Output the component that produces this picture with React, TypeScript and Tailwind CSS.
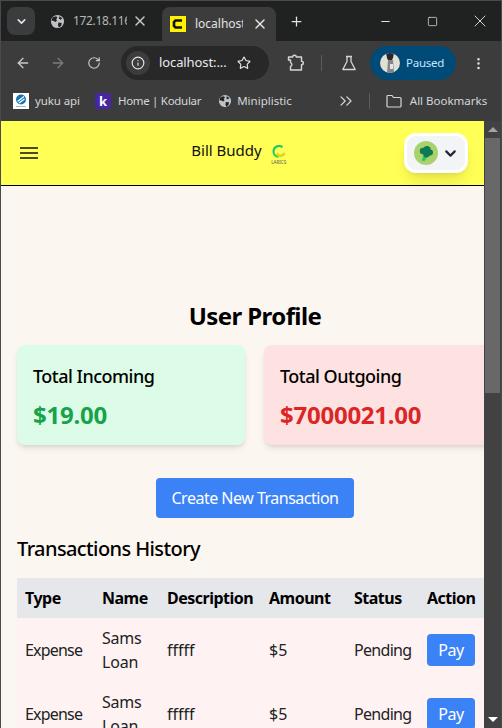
import { ArrowLeft, ArrowRight, ChevronDown, ChevronsRight, Info, Minus, MoreVertical, Plus, RotateCw, Square, Star, X } from "lucide-react";

const rows = [
  { type: "Expense", name: "Sams Loan", description: "fffff", amount: "$5", status: "Pending" },
  { type: "Expense", name: "Sams Loan", description: "fffff", amount: "$5", status: "Pending" },
];

function GlobeIcon({ className }: { className?: string }) {
  return (
    <svg viewBox="0 0 16 16" className={className}>
      <circle cx="8" cy="8" r="7" fill="currentColor" />
      <path d="M3 3.5 6.5 2.5 8 4 6.5 5.5 7.5 7 6 8.5 4 7.5 1.5 7ZM9 9l3.5.5-.5 3-2.5 2-1-2.5ZM10 2.5l3 2-1.5 1.5-2-1Z" fill="#202124" />
    </svg>
  );
}

function CodeFavicon() {
  return (
    <svg viewBox="0 0 16 16" className="h-4 w-4 shrink-0">
      <rect width="16" height="16" fill="#fff200" />
      <path d="M12 4.5H5.5L4 6v4l1.5 1.5H12" fill="none" stroke="#111" strokeWidth="2.6" />
    </svg>
  );
}

function ExtensionIcon() {
  return (
    <svg viewBox="0 0 18 18" className="h-[18px] w-[18px] text-[#d5d7d9]" fill="none" stroke="currentColor" strokeWidth="1.4" strokeLinejoin="round">
      <path d="M1.5 3h4.2a1.8 1.8 0 0 1 3.6 0h5.2v4.2a1.8 1.8 0 0 1 0 3.6V16H3.5v-3.6a2 2 0 0 0 0-3.8V6H1.5Z" />
    </svg>
  );
}

function FlaskIcon() {
  return (
    <svg viewBox="0 0 16 16" className="h-4 w-4 text-[#d5d7d9]" fill="none" stroke="currentColor" strokeWidth="1.3" strokeLinejoin="round">
      <path d="M5 1.5h6M6 1.5v5L1.8 14.5h12.4L10 6.5v-5" />
    </svg>
  );
}

function FolderIcon() {
  return (
    <svg viewBox="0 0 16 14" className="h-[14px] w-4 text-[#d5d7d9]" fill="none" stroke="currentColor" strokeWidth="1.2" strokeLinejoin="round">
      <path d="M1 2.5a1 1 0 0 1 1-1h4l1.5 2H14a1 1 0 0 1 1 1v7.5a1 1 0 0 1-1 1H2a1 1 0 0 1-1-1Z" />
    </svg>
  );
}

function ProfilePicture() {
  return (
    <svg viewBox="0 0 20 20" className="h-5 w-5 rounded-full">
      <rect width="20" height="20" fill="#e0e0d4" />
      <path d="M6 0h8l-1 5-1 2H8L7 5Z" fill="#26282a" />
      <path d="M8 7h5l1 13H7Z" fill="#85868a" />
      <rect x="10" y="11" width="3" height="5" fill="#e4e4e4" />
    </svg>
  );
}

function YukuIcon() {
  return (
    <div className="flex h-4 w-4 items-center justify-center bg-white">
      <svg viewBox="0 0 16 16" className="h-4 w-4">
        <circle cx="8" cy="6.5" r="5" fill="#1573b7" />
        <path d="M4.5 8.5 11 3.5M6 10l5.5-4" stroke="#fff" strokeWidth="1.3" />
        <rect x="3" y="13" width="10" height="1" fill="#9fb8c9" />
      </svg>
    </div>
  );
}

function BroccoliIcon() {
  return (
    <svg viewBox="0 0 24 24" className="h-6 w-6 rounded-full">
      <rect width="24" height="24" fill="#a9d26f" />
      <path d="M9.5 15 7.5 19.5 10.5 20 13 16Z" fill="#18c964" />
      <circle cx="9" cy="10" r="3.2" fill="#0d7a52" />
      <circle cx="13" cy="8.5" r="3.6" fill="#0d7a52" />
      <circle cx="16" cy="11.5" r="3" fill="#0d7a52" />
      <circle cx="12.5" cy="13" r="3.4" fill="#0d7a52" />
    </svg>
  );
}

function LogoMark() {
  return (
    <div className="flex w-[18px] flex-col items-center">
      <svg viewBox="0 0 16 15" className="h-[15px] w-[16px]">
        <path d="M11.5 2.2A5.5 5.5 0 0 0 2.5 6.5c0 3 2.2 5.2 5 5.2" fill="none" stroke="#18c964" strokeWidth="2" />
        <path d="M5.5 8.5c1.7 3 6.5 3 8-.5" fill="none" stroke="#d8d820" strokeWidth="2.6" />
      </svg>
      <span className="text-[4.5px] leading-[5px] whitespace-nowrap text-[#555]">LARICS</span>
    </div>
  );
}

function BrowserChrome() {
  return (
    <div className="font-['Noto_Sans',sans-serif] text-[#e3e3e3]">
      {/* tab strip */}
      <div className="flex h-10 items-center bg-[#202221] pl-[6px]">
        <div className="flex h-7 w-7 shrink-0 items-center justify-center rounded-lg bg-[#3b3c3d]">
          <ChevronDown size={13} strokeWidth={3} />
        </div>
        <div className="flex w-[127px] shrink-0 items-center pl-[15px]">
          <GlobeIcon className="h-[15px] w-[15px] shrink-0 text-[#bfc1c3]" />
          <span className="ml-[8px] w-[54px] overflow-hidden text-[12px] tracking-[-0.35px] whitespace-nowrap text-[#b5b7b9]">172.18.116</span>
          <X size={16} strokeWidth={2.2} className="ml-[5px] shrink-0 text-[#c7c7c7]" />
        </div>
        <div className="mt-1.5 flex h-[34px] w-[114px] shrink-0 items-center self-start rounded-t-lg bg-[#3c3c3c] pl-[8px]">
          <CodeFavicon />
          <span className="ml-[9px] w-[48px] overflow-hidden text-[12px] whitespace-nowrap">localhost</span>
          <X size={16} strokeWidth={2.2} className="ml-[9px] shrink-0" />
        </div>
        <Plus size={15} strokeWidth={2} className="ml-[13px] shrink-0" />
        <Minus size={13} className="ml-[75px] shrink-0" />
        <Square size={11} strokeWidth={1.6} className="ml-[35px] shrink-0" />
        <X size={20} strokeWidth={1.1} className="ml-[32px] shrink-0" />
      </div>
      {/* toolbar */}
      <div className="flex h-11 items-center bg-[#3c3c3c] pl-[14px]">
        <ArrowLeft size={16} className="shrink-0 text-[#c7c9cb]" />
        <ArrowRight size={16} className="ml-[19px] shrink-0 text-[#7b7c7d]" />
        <RotateCw size={14} className="ml-[21px] shrink-0 text-[#c7c9cb]" />
        <div className="ml-[20px] flex h-[34px] w-[148px] shrink-0 items-center rounded-full bg-[#282828] pl-[5px]">
          <div className="flex h-6 w-6 items-center justify-center rounded-full bg-[#3c3c3c]">
            <Info size={14} />
          </div>
          <span className="ml-[9px] text-[13px] tracking-[-0.1px] text-[#e8eaed]">localhost:...</span>
          <Star size={14} className="ml-[10px] shrink-0" />
        </div>
        <div className="ml-[18px]"><ExtensionIcon /></div>
        <div className="ml-[16px] h-4 w-px bg-[#5c5c5c]" />
        <div className="ml-[19px]"><FlaskIcon /></div>
        <div className="ml-[13px] flex h-[34px] w-[86px] items-center rounded-full bg-[#004a77] pl-[10px]">
          <ProfilePicture />
          <span className="ml-[6px] text-[11.5px] tracking-[-0.25px] text-[#c2e7ff]">Paused</span>
        </div>
        <MoreVertical size={15} className="ml-[15px] shrink-0" />
      </div>
      {/* bookmarks */}
      <div className="flex h-[36px] items-center bg-[#3c3c3c] pb-1 pl-[12px] text-[11.5px] text-[#d5d7d9]">
        <YukuIcon />
        <span className="ml-[6px] tracking-[-0.1px]">yuku api</span>
        <div className="ml-[15px] flex h-4 w-4 items-center justify-center rounded-[2px] bg-[#4527a0] text-[13px] font-bold leading-none text-white">k</div>
        <span className="ml-[7px] tracking-[-0.3px]">Home | Kodular</span>
        <GlobeIcon className="ml-[17px] h-[14px] w-[14px] shrink-0 text-[#bfc1c3]" />
        <span className="ml-[5px]">Miniplistic</span>
        <ChevronsRight size={20} strokeWidth={1.5} className="ml-[44px] shrink-0" />
        <div className="ml-[13px] h-4 w-px bg-[#5c5c5c]" />
        <div className="ml-[16px]"><FolderIcon /></div>
        <span className="ml-[8px] whitespace-nowrap">All Bookmarks</span>
      </div>
    </div>
  );
}

function PageHeader() {
  return (
    <header className="flex h-[65px] shrink-0 items-center justify-between border-b border-black bg-[#ffff55] pr-[16px] pl-[19px]">
      <svg viewBox="0 0 18 14" className="h-[14px] w-[18px]" fill="none" stroke="#111" strokeWidth="1.6">
        <path d="M0 2h18M0 7h18M0 12h18" />
      </svg>
      <div className="ml-[37px] flex items-center gap-[8px]">
        <span className="mb-[5px] text-[15px] text-[#111]">Bill Buddy</span>
        <div className="mt-[3px]"><LogoMark /></div>
      </div>
      <div className="flex h-10 w-[64px] items-center rounded-xl border-[3px] border-white bg-[#f3f4f6] pl-[7px] shadow-lg">
        <BroccoliIcon />
        <ChevronDown size={17} strokeWidth={3} className="ml-[4px] text-[#1f2937]" />
      </div>
    </header>
  );
}

function SummaryCard({ title, value, bg, color }: { title: string; value: string; bg: string; color: string }) {
  return (
    <div className={`h-[100px] w-[228px] shrink-0 rounded-lg p-4 shadow-md ${bg}`}>
      <h3 className="text-[18px] leading-[30px] font-medium tracking-[-0.5px] text-black">{title}</h3>
      <p className={`mt-2 text-2xl font-bold tracking-[-0.25px] ${color}`}>{value}</p>
    </div>
  );
}

function TransactionTable() {
  return (
    <table className="w-[468px] table-fixed border-collapse text-left text-[16px] leading-6">
      <colgroup>
        <col className="w-[77px]" />
        <col className="w-[65px]" />
        <col className="w-[102px]" />
        <col className="w-[85px]" />
        <col className="w-[73px]" />
        <col className="w-[66px]" />
      </colgroup>
      <thead className="bg-[#e5e7eb]">
        <tr className="h-10">
          {["Type", "Name", "Description", "Amount", "Status", "Action"].map((label) => (
            <th key={label} className="px-2 font-bold tracking-[-0.5px] whitespace-nowrap text-black">{label}</th>
          ))}
        </tr>
      </thead>
      <tbody className="bg-[#fef2f2] text-[#222]">
        {rows.map((row, i) => (
          <tr key={i} className="h-16">
            <td className="px-2 tracking-[-0.8px]">{row.type}</td>
            <td className="px-2 tracking-[-0.2px]">{row.name}</td>
            <td className="px-2">{row.description}</td>
            <td className="px-2">{row.amount}</td>
            <td className="px-2 tracking-[-0.7px]">{row.status}</td>
            <td className="px-2">
              <button type="button" className="h-8 w-12 rounded bg-[#3b82f6] tracking-[-0.5px] text-white">Pay</button>
            </td>
          </tr>
        ))}
      </tbody>
    </table>
  );
}

function Scrollbar() {
  return (
    <div className="flex w-[17px] shrink-0 flex-col items-center bg-[#424242]">
      <div className="mt-[6px] h-0 w-0 border-x-[5px] border-b-[5px] border-x-transparent border-b-[#a3a3a3]" />
      <div className="mt-[6px] h-[255px] w-[15px] bg-[#686868]" />
      <div className="mt-auto mb-[6px] h-0 w-0 border-x-[5px] border-t-[5px] border-x-transparent border-t-white" />
    </div>
  );
}

export default function App() {
  return (
    <div className="flex h-[728px] w-[502px] flex-col overflow-hidden border-x border-t border-[#4a4a4a] bg-[#424242] font-['Noto_Sans',sans-serif]">
      <BrowserChrome />
      <div className="flex min-h-0 flex-1">
        <main className="flex min-w-0 flex-1 flex-col overflow-hidden bg-[#fcf6f0]">
          <PageHeader />
          {/* content overflows the viewport, so centred items sit right of the visible middle */}
          <div className="w-[508px] shrink-0">
            <h1 className="mt-[114px] text-center text-[24px] leading-8 font-bold tracking-[-0.6px] text-black">User Profile</h1>
            <section className="mt-[13px] flex gap-[19px] pl-4">
              <SummaryCard title="Total Incoming" value="$19.00" bg="bg-[#dcfce7]" color="text-[#16a34a]" />
              <SummaryCard title="Total Outgoing" value="$7000021.00" bg="bg-[#fee2e2]" color="text-[#dc2626]" />
            </section>
            <div className="mt-[33px] flex justify-center">
              <button type="button" className="h-10 w-[198px] rounded bg-[#3b82f6] text-[16px] tracking-[-0.5px] text-white">Create New Transaction</button>
            </div>
            <h2 className="mt-[17px] pl-4 text-[20px] leading-[28px] font-medium tracking-[-0.6px] text-black">Transactions History</h2>
            <div className="mt-[15px] pl-4">
              <TransactionTable />
            </div>
          </div>
        </main>
        <Scrollbar />
      </div>
    </div>
  );
}
